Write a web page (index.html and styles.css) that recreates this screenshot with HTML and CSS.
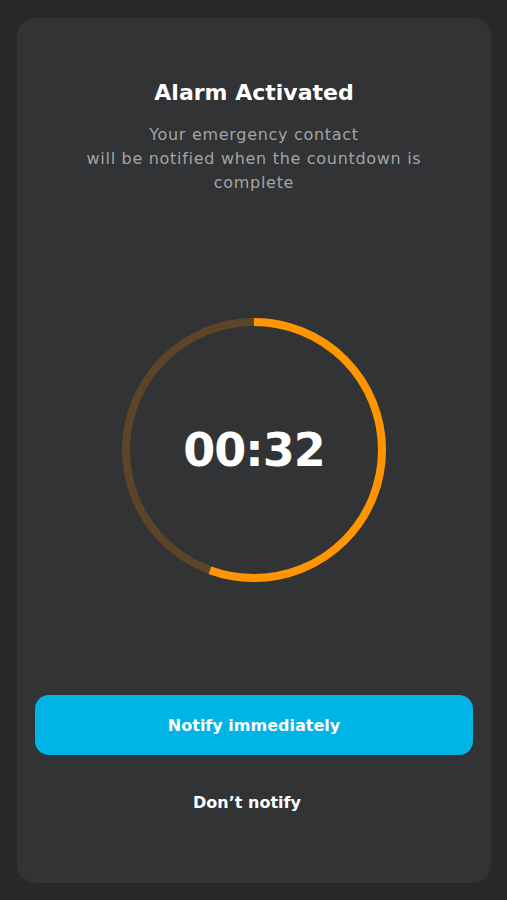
FILE: index.html
```html
<!DOCTYPE html>
<html lang="en">
<head>
    <meta charset="UTF-8">
    <meta name="viewport" content="width=device-width, initial-scale=1.0">
    <title>Alarm Activated</title>
    <link rel="stylesheet" href="styles.css">
</head>
<body>
    <div class="card">
        <h1 class="title">Alarm Activated</h1>
        <p class="subtitle">Your emergency contact<br>will be notified when the countdown is<br>complete</p>

        <!-- Cuenta atrás -->
        <div class="timer">
            <svg class="timer-ring" width="272" height="272" viewBox="0 0 272 272">
                <circle class="ring-track" cx="136" cy="136" r="128"></circle>
                <circle class="ring-progress" cx="136" cy="136" r="128"
                        stroke-dasharray="447 804" transform="rotate(-90 136 136)"></circle>
            </svg>
            <span class="timer-value">00:32</span>
        </div>

        <button class="notify-btn">Notify immediately</button>
        <button class="skip-btn">Don’t notify</button>
    </div>
</body>
</html>
```

FILE: styles.css
```css
/* Estilos generales */
body {
    margin: 0;
    padding: 18px 16px 17px 17px;
    background-color: #282828;
    font-family: "DejaVu Sans", Arial, sans-serif;
    color: #fff;
}

.card {
    height: 865px;
    box-sizing: border-box;
    padding: 61px 18px 0 18px;
    background-color: #313335;
    border-radius: 18px;
    display: flex;
    flex-direction: column;
    align-items: center;
}

.title {
    margin: 0;
    font-size: 22px;
    line-height: 28px;
    font-weight: bold;
}

.subtitle {
    margin: 16px 0 0 0;
    font-size: 16px;
    line-height: 24px;
    letter-spacing: 0.7px;
    color: #a3a4a5;
    text-align: center;
}

/* Cuenta atrás */
.timer {
    position: relative;
    margin-top: 119px;
    width: 272px;
    height: 272px;
}

.timer-ring {
    display: block;
}

.ring-track, .ring-progress {
    fill: none;
    stroke-width: 8;
}

.ring-track {
    stroke: #5b4427;
}

.ring-progress {
    stroke: #ff9500;
}

.timer-value {
    position: absolute;
    inset: 0;
    display: flex;
    align-items: center;
    justify-content: center;
    font-size: 46px;
    font-weight: bold;
    letter-spacing: -1px;
}

/* Botones */
.notify-btn {
    margin-top: 109px;
    width: 100%;
    height: 60px;
    border: none;
    border-radius: 14px;
    background-color: #00b4e5;
    color: #fff;
    font-family: inherit;
    font-size: 16px;
    font-weight: bold;
    cursor: pointer;
}

.skip-btn {
    margin-top: 36px;
    padding: 0 14px 0 0;
    border: none;
    background: transparent;
    color: #fff;
    font-family: inherit;
    font-size: 16px;
    line-height: 24px;
    font-weight: bold;
    cursor: pointer;
}
```
